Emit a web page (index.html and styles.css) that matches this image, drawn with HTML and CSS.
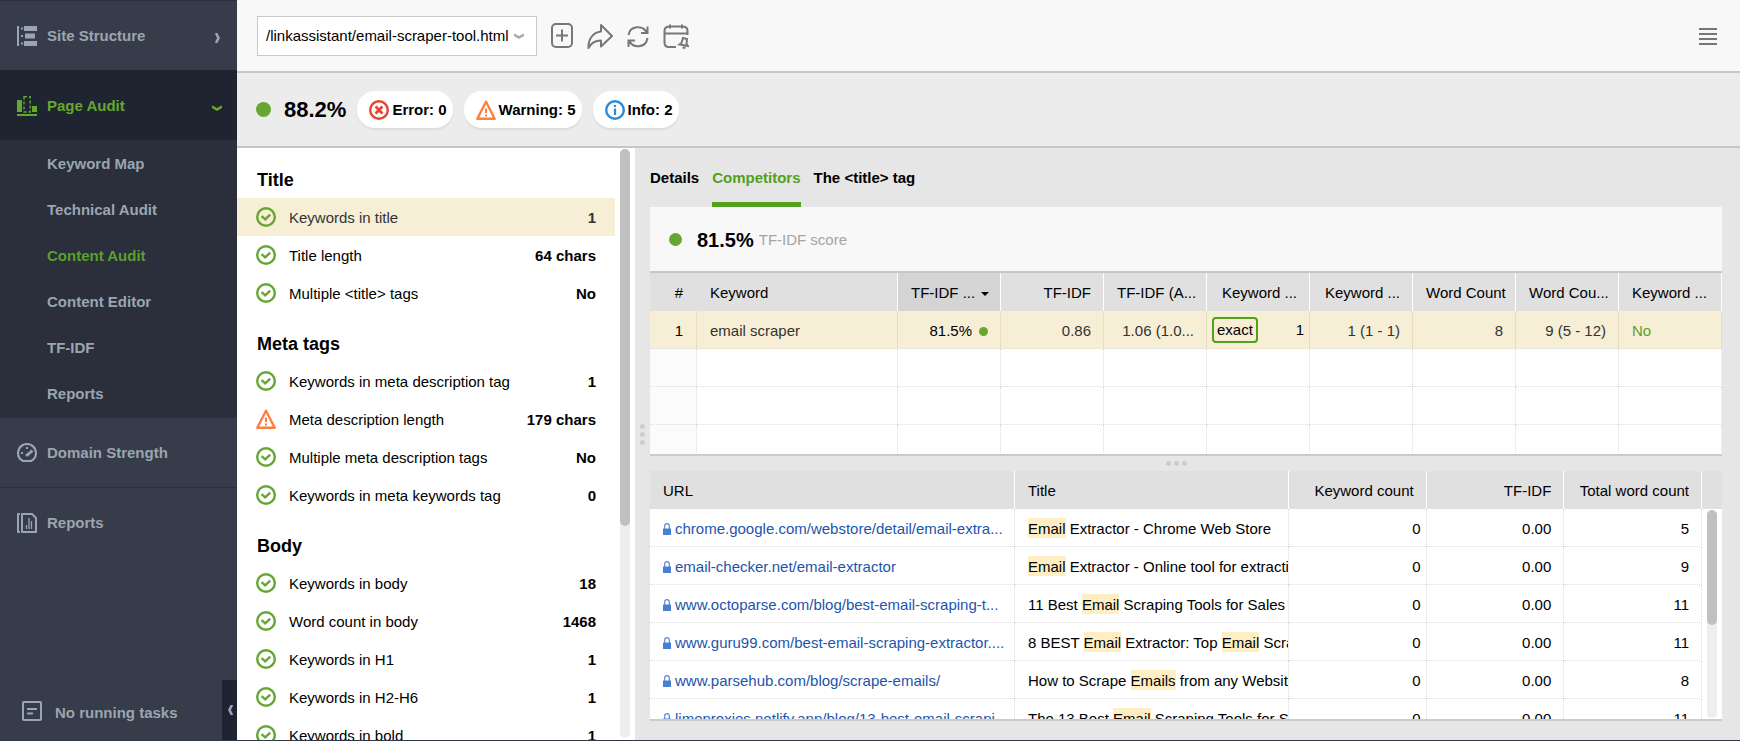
FILE: index.html
```html
<!DOCTYPE html>
<html lang="en">
<head>
    <meta charset="UTF-8">
    <meta name="viewport" content="width=device-width, initial-scale=1">
    <title>Content Audit</title>
    <link rel="stylesheet" href="styles.css">
</head>
<body>

<svg class="sprite" aria-hidden="true">
    <symbol id="ok" viewBox="0 0 20 20">
        <circle cx="10" cy="10" r="8.8" fill="none" stroke="#66a631" stroke-width="2.4"/>
        <path d="M5.600 9.200l3.600 3.200 5-4.800" fill="none" stroke="#66a631" stroke-width="2.400"/>
    </symbol>
    <symbol id="warn" viewBox="0 0 20 20">
        <path d="M10 1.800L18.700 18.800H1.300z" fill="none" stroke="#ff7f3f" stroke-width="2.400" stroke-linejoin="round"/>
        <path d="M10 8.500v4.500M10 14.400v2" stroke="#ff7f3f" stroke-width="2"/>
    </symbol>
    <symbol id="error" viewBox="0 0 20 20">
        <circle cx="10" cy="10" r="8.8" fill="none" stroke="#e8432f" stroke-width="2.400"/>
        <path d="M6.600 6.600l6.800 6.800M13.400 6.600l-6.800 6.800" stroke="#e8432f" stroke-width="2.800"/>
    </symbol>
    <symbol id="info" viewBox="0 0 20 20">
        <circle cx="10" cy="10" r="8.8" fill="none" stroke="#2a8adb" stroke-width="2.400"/>
        <path d="M10 5v2M10 8.500v6.500" stroke="#2a8adb" stroke-width="2.200"/>
    </symbol>
    <symbol id="lock" viewBox="0 0 8 12">
        <path d="M1.700 6V3a2.300 2.300 0 0 1 4.600 0v3" fill="none" stroke="#5b8ad6" stroke-width="1.200"/>
        <path d="M0 5.500h8V12H0z" fill="#4a80d2"/>
    </symbol>
</svg>

<div class="app">
    <nav class="sidebar">
        <a class="nav-item" href="#">
            <svg class="icon" viewBox="0 0 20 20" fill="currentColor"><path d="M0 0h2v20H0zM7 0h13v5H7zM8 7.500h10v5H8zM7 15h13v5H7zM4 1.500h2v2H4zM4 9h2v2H4zM4 16.500h2v2H4z"/></svg>
            <span>Site Structure</span>
            <svg class="arrow" viewBox="0 0 10 10"><path d="M4 0L6.500 5L4 10" fill="none" stroke="currentColor" stroke-width="2.600"/></svg>
        </a>
        <a class="nav-item open" href="#">
            <svg class="icon" viewBox="0 0 20 20" fill="currentColor"><path d="M0 4h5v12H0zM15 10h5v6h-5zM0 18h20v2H0z"/><path d="M7 .8h6.200v15.200H7z" fill="none" stroke="currentColor" stroke-width="1.400" stroke-dasharray="3 2"/></svg>
            <span>Page Audit</span>
            <svg class="arrow" viewBox="0 0 10 10"><path d="M0 3.500L5 6.500L10 3.500" fill="none" stroke="currentColor" stroke-width="2.600"/></svg>
        </a>
        <div class="submenu">
            <a href="#">Keyword Map</a>
            <a href="#">Technical Audit</a>
            <a class="active" href="#">Content Audit</a>
            <a href="#">Content Editor</a>
            <a href="#">TF-IDF</a>
            <a href="#">Reports</a>
        </div>
        <a class="nav-item" href="#">
            <svg class="icon" viewBox="0 0 20 20" fill="none" stroke="currentColor" stroke-width="2.200"><path d="M6 18h8c3-1.500 5-4 5-8a9 9 0 0 0-18 0c0 4 2 6.500 5 8z"/><path d="M10 12.200l5.500-4.600" stroke-width="2.800"/><circle cx="10" cy="12" r="1.600" fill="currentColor" stroke="none"/><path d="M9 5h2M4 10h2"/></svg>
            <span>Domain Strength</span>
        </a>
        <a class="nav-item" href="#">
            <svg class="icon" viewBox="0 0 20 20" fill="none" stroke="currentColor" stroke-width="2"><path d="M3 1H1v18h2M5 1h10l4 4v14H5z" stroke-linejoin="round"/><path d="M9.500 12v4M12 5v11M14.500 8v8" stroke-width="1.300"/></svg>
            <span>Reports</span>
        </a>
        <div class="tasks">
            <svg class="icon" viewBox="0 0 20 20" fill="none" stroke="currentColor" stroke-width="2"><rect x="1" y="1" width="18" height="18" rx="1"/><path d="M5 8h10M5 12.500h6"/></svg>
            <span>No running tasks</span>
            <button class="collapse" aria-label="Collapse menu">
                <svg class="arrow" viewBox="0 0 10 10"><path d="M7 0L4.500 5L7 10" fill="none" stroke="currentColor" stroke-width="2.600"/></svg>
            </button>
        </div>
    </nav>

    <div class="main">
        <header class="toolbar">
            <div class="page-select">
                <select aria-label="Page">
                    <option>/linkassistant/email-scraper-tool.html</option>
                </select>
                <svg class="arrow" viewBox="0 0 10 10"><path d="M0 3.500L5 6.500L10 3.500" fill="none" stroke="#aaa" stroke-width="2.600"/></svg>
            </div>
            <button aria-label="Add page"><svg viewBox="0 0 26 26"><rect x="3" y="1" width="20" height="23" rx="4"/><path d="M13 6.500v12M7 12.500h12"/></svg></button>
            <button aria-label="Share"><svg viewBox="0 0 26 26"><path d="M14 2l11 11-11 10.500v-6C8 17.500 4 20 1.500 25 1 16 6 9.500 14 8.500z" stroke-linejoin="round"/></svg></button>
            <button aria-label="Refresh"><svg viewBox="0 0 26 26"><path d="M3.500 12C5 2.500 18 1.500 22 10M22.500 3.500V10H16M22.500 15C21 25 8 26 4 17.500M3.500 24v-6.500H10"/></svg></button>
            <button aria-label="Schedule"><svg viewBox="0 0 26 26"><path d="M13 24H6c-3 0-4.500-2-4.500-4.500V8c0-3 1.500-4.500 4.500-4.500h14c3 0 4.500 1.500 4.500 4.500v4M1.500 10.500h23M7 1.500v4M19 1.500v4"/><path d="M16.500 21.500l2-1.500 1.500-5 4 1-.5 5 1.500 2zM19.500 24.800h3"/></svg></button>
            <button class="menu" aria-label="Menu"><svg viewBox="0 0 18 18"><path d="M0 2h18M0 7h18M0 12h18M0 17h18"/></svg></button>
        </header>

        <section class="summary">
            <span class="dot"></span>
            <strong class="total">88.2%</strong>
            <button class="pill"><svg class="icon"><use href="#error"/></svg>Error: 0</button>
            <button class="pill"><svg class="icon"><use href="#warn"/></svg>Warning: 5</button>
            <button class="pill"><svg class="icon"><use href="#info"/></svg>Info: 2</button>
        </section>

        <div class="content">
            <aside class="factors">
                <div class="factor-list">
                    <h2>Title</h2>
                    <ul>
                        <li class="selected"><svg class="icon"><use href="#ok"/></svg><span>Keywords in title</span><b>1</b></li>
                        <li><svg class="icon"><use href="#ok"/></svg><span>Title length</span><b>64 chars</b></li>
                        <li><svg class="icon"><use href="#ok"/></svg><span>Multiple &lt;title&gt; tags</span><b>No</b></li>
                    </ul>
                    <h2>Meta tags</h2>
                    <ul>
                        <li><svg class="icon"><use href="#ok"/></svg><span>Keywords in meta description tag</span><b>1</b></li>
                        <li><svg class="icon"><use href="#warn"/></svg><span>Meta description length</span><b>179 chars</b></li>
                        <li><svg class="icon"><use href="#ok"/></svg><span>Multiple meta description tags</span><b>No</b></li>
                        <li><svg class="icon"><use href="#ok"/></svg><span>Keywords in meta keywords tag</span><b>0</b></li>
                    </ul>
                    <h2>Body</h2>
                    <ul>
                        <li><svg class="icon"><use href="#ok"/></svg><span>Keywords in body</span><b>18</b></li>
                        <li><svg class="icon"><use href="#ok"/></svg><span>Word count in body</span><b>1468</b></li>
                        <li><svg class="icon"><use href="#ok"/></svg><span>Keywords in H1</span><b>1</b></li>
                        <li><svg class="icon"><use href="#ok"/></svg><span>Keywords in H2-H6</span><b>1</b></li>
                        <li><svg class="icon"><use href="#ok"/></svg><span>Keywords in bold</span><b>1</b></li>
                    </ul>
                </div>
                <div class="scroll"><div class="thumb" style="height: 64%"></div></div>
            </aside>

            <div class="grip vertical"><i></i><i></i><i></i></div>

            <section class="details">
                <div class="tabs">
                    <button>Details</button>
                    <button class="active">Competitors</button>
                    <button>The &lt;title&gt; tag</button>
                </div>
                <div class="score">
                    <span class="dot"></span>
                    <strong>81.5%</strong>
                    <span class="hint">TF-IDF score</span>
                </div>
                <div class="keywords">
                    <table>
                        <colgroup>
                            <col class="c-num"><col class="c-keyword"><col><col><col><col><col><col><col><col>
                        </colgroup>
                        <thead>
                            <tr>
                                <th class="num">#</th>
                                <th class="left">Keyword</th>
                                <th class="sorted">TF-IDF ...<i class="sort"></i></th>
                                <th>TF-IDF</th>
                                <th>TF-IDF (A...</th>
                                <th>Keyword ...</th>
                                <th>Keyword ...</th>
                                <th>Word Count</th>
                                <th>Word Cou...</th>
                                <th class="left">Keyword ...</th>
                            </tr>
                        </thead>
                        <tbody>
                            <tr class="selected">
                                <td class="num">1</td>
                                <td class="left">email scraper</td>
                                <td class="rate">81.5%<i class="dot"></i></td>
                                <td>0.86</td>
                                <td>1.06 (1.0...</td>
                                <td class="match"><div><span class="exact">exact</span>1</div></td>
                                <td>1 (1 - 1)</td>
                                <td>8</td>
                                <td>9 (5 - 12)</td>
                                <td class="left no">No</td>
                            </tr>
                            <tr><td></td><td></td><td></td><td></td><td></td><td></td><td></td><td></td><td></td><td></td></tr>
                            <tr><td></td><td></td><td></td><td></td><td></td><td></td><td></td><td></td><td></td><td></td></tr>
                            <tr><td></td><td></td><td></td><td></td><td></td><td></td><td></td><td></td><td></td><td></td></tr>
                        </tbody>
                    </table>
                </div>
                <div class="grip horizontal"><i></i><i></i><i></i></div>
                <div class="pages">
                    <table>
                        <colgroup>
                            <col class="c-url"><col class="c-title"><col class="c-count"><col class="c-count"><col class="c-count">
                        </colgroup>
                        <thead>
                            <tr>
                                <th class="left">URL</th>
                                <th class="left">Title</th>
                                <th>Keyword count</th>
                                <th>TF-IDF</th>
                                <th>Total word count</th>
                            </tr>
                        </thead>
                        <tbody>
                            <tr>
                                <td class="left"><a href="#"><svg class="lock"><use href="#lock"/></svg>chrome.google.com/webstore/detail/email-extra...</a></td>
                                <td class="left"><mark>Email</mark> Extractor - Chrome Web Store</td>
                                <td class="tight">0</td>
                                <td>0.00</td>
                                <td>5</td>
                            </tr>
                            <tr>
                                <td class="left"><a href="#"><svg class="lock"><use href="#lock"/></svg>email-checker.net/email-extractor</a></td>
                                <td class="left"><mark>Email</mark> Extractor - Online tool for extracting</td>
                                <td class="tight">0</td>
                                <td>0.00</td>
                                <td>9</td>
                            </tr>
                            <tr>
                                <td class="left"><a href="#"><svg class="lock"><use href="#lock"/></svg>www.octoparse.com/blog/best-email-scraping-t...</a></td>
                                <td class="left">11 Best <mark>Email</mark> Scraping Tools for Sales</td>
                                <td class="tight">0</td>
                                <td>0.00</td>
                                <td>11</td>
                            </tr>
                            <tr>
                                <td class="left"><a href="#"><svg class="lock"><use href="#lock"/></svg>www.guru99.com/best-email-scraping-extractor....</a></td>
                                <td class="left">8 BEST <mark>Email</mark> Extractor: Top <mark>Email</mark> Scraper</td>
                                <td class="tight">0</td>
                                <td>0.00</td>
                                <td>11</td>
                            </tr>
                            <tr>
                                <td class="left"><a href="#"><svg class="lock"><use href="#lock"/></svg>www.parsehub.com/blog/scrape-emails/</a></td>
                                <td class="left">How to Scrape <mark>Emails</mark> from any Website</td>
                                <td class="tight">0</td>
                                <td>0.00</td>
                                <td>8</td>
                            </tr>
                            <tr>
                                <td class="left"><a href="#"><svg class="lock"><use href="#lock"/></svg>limeproxies.netlify.app/blog/13-best-email-scrapi...</a></td>
                                <td class="left">The 13 Best <mark>Email</mark> Scraping Tools for Sales</td>
                                <td class="tight">0</td>
                                <td>0.00</td>
                                <td>11</td>
                            </tr>
                        </tbody>
                    </table>
                    <div class="pages-side">
                        <div class="scroll"><div class="thumb" style="height: 55%"></div></div>
                    </div>
                </div>
            </section>
        </div>
    </div>
</div>

</body>
</html>
```

FILE: styles.css
```css
* {
    box-sizing: border-box;
}
body {
    margin: 0;
    font-family: "Liberation Sans", Arial, sans-serif;
    font-size: 15px;
    line-height: 20px;
    color: #000;
}
button, select {
    font: inherit;
    color: inherit;
    margin: 0;
    padding: 0;
    border: 0;
    background: none;
    cursor: pointer;
}
a {
    text-decoration: none;
}
.sprite {
    display: none;
}
.icon {
    width: 20px;
    height: 20px;
    flex: none;
}
.arrow {
    width: 10px;
    height: 10px;
    flex: none;
}
.dot {
    flex: none;
    border-radius: 50%;
    background: #66a631;
}
.app {
    display: flex;
    height: 100vh;
    overflow: hidden;
    border-bottom: 1px solid #30384a;
}

/* sidebar */
.sidebar {
    width: 237px;
    flex: none;
    display: flex;
    flex-direction: column;
    background: #363c4a;
    color: #9ba5b1;
    font-weight: bold;
}
.nav-item {
    display: flex;
    align-items: center;
    gap: 10px;
    height: 70px;
    padding: 0 15px 0 17px;
    border-top: 1px solid #2a303c;
    color: inherit;
}
.nav-item span {
    flex: 1;
    padding-top: 1px;
}
.nav-item .arrow {
    margin-top: 4px;
}
.nav-item.open {
    background: #1f2530;
    border-color: #1f2530;
    color: #66a631;
}
.submenu {
    background: #2a2f3b;
    padding-bottom: 1px;
}
.submenu a {
    display: block;
    padding: 14px 0 12px 47px;
    color: inherit;
}
.submenu a.active {
    color: #5aa02c;
}
.tasks {
    display: flex;
    align-items: center;
    gap: 13px;
    margin-top: auto;
    height: 60px;
    padding-left: 22px;
}
.tasks .icon {
    margin-top: 2px;
}
.tasks span {
    padding-top: 5px;
}
.collapse {
    display: flex;
    align-items: center;
    justify-content: center;
    width: 15px;
    height: 100%;
    margin-left: auto;
    background: #1f2530;
}

/* toolbar */
.main {
    flex: 1;
    min-width: 0;
    display: flex;
    flex-direction: column;
}
.toolbar {
    display: flex;
    align-items: center;
    gap: 12px;
    height: 73px;
    flex: none;
    padding: 0 23px 0 20px;
    background: #f8f8f8;
    border-bottom: 2px solid #c6c6c6;
}
.toolbar button {
    height: 26px;
}
.toolbar svg {
    display: block;
}
.toolbar button svg {
    width: 26px;
    height: 26px;
    fill: none;
    stroke: #777;
    stroke-width: 2;
}
.toolbar .menu {
    margin-left: auto;
    height: 18px;
}
.toolbar .menu svg {
    width: 18px;
    height: 18px;
}
.page-select {
    position: relative;
    width: 280px;
}
.page-select select {
    appearance: none;
    width: 100%;
    height: 40px;
    padding: 0 24px 0 8px;
    border: 1px solid #c9c9c9;
    background: #fff;
}
.page-select .arrow {
    position: absolute;
    right: 13px;
    top: 15px;
    pointer-events: none;
}

/* audit summary */
.summary {
    display: flex;
    align-items: center;
    gap: 11px;
    height: 75px;
    flex: none;
    padding: 0 19px;
    background: #ececec;
    border-bottom: 2px solid #c6c6c6;
}
.summary .dot {
    width: 15px;
    height: 15px;
}
.total {
    font-size: 22px;
    margin-left: 2px;
}
.pill {
    display: flex;
    align-items: center;
    gap: 3px;
    height: 37px;
    padding: 0 6px 0 12px;
    border-radius: 18px;
    background: #fff;
    box-shadow: 0 2px 2px #ddd;
    font-weight: bold;
}

/* factors list */
.content {
    flex: 1;
    min-height: 0;
    display: flex;
    background: #e6e6e6;
}
.factors {
    display: flex;
    width: 398px;
    flex: none;
    padding-right: 5px;
    gap: 5px;
    background: #fff;
}
.factor-list {
    flex: 1;
    overflow: hidden;
}
.factor-list h2 {
    margin: 0;
    padding: 22px 20px 8px;
    font-size: 18px;
    line-height: 20px;
}
.factor-list ul {
    list-style: none;
    margin: 0;
    padding: 0;
}
.factor-list li {
    display: flex;
    align-items: center;
    height: 38px;
    padding: 0 19px;
    gap: 13px;
}
.factor-list span, .factor-list b {
    padding-top: 2px;
}
.factor-list li b {
    margin-left: auto;
}
.factor-list .selected {
    background: #f7eed6;
    color: #333;
}
.scroll {
    width: 10px;
    margin: 1px 0 2px;
    border-radius: 5px;
    background: #eee;
}
.thumb {
    border-radius: 5px;
    background: #c0c0c0;
}

/* splitters */
.grip {
    display: flex;
    align-items: center;
    justify-content: center;
    gap: 3px;
    height: 15px;
    flex: none;
}
.grip i {
    width: 5px;
    height: 5px;
    border-radius: 50%;
    background: #cdcdcd;
}
.grip.vertical {
    flex-direction: column;
    width: 15px;
    height: auto;
    padding-right: 1px;
    padding-bottom: 19px;
}
.grip.horizontal {
    padding-right: 20px;
}

/* details */
.details {
    flex: 1;
    min-width: 0;
    display: flex;
    flex-direction: column;
    padding: 0 18px 19px 0;
}
.tabs {
    display: flex;
    gap: 13px;
    height: 59px;
    flex: none;
}
.tabs button {
    padding-top: 5px;
    font-weight: bold;
    border-bottom: 5px solid transparent;
}
.tabs .active {
    color: #53a01c;
    border-color: #53a01c;
}
.score {
    display: flex;
    align-items: center;
    height: 66px;
    flex: none;
    padding-left: 19px;
    background: #f8f8f8;
    border-bottom: 2px solid #c6c6c6;
}
.score .dot {
    width: 13px;
    height: 13px;
    margin-right: 15px;
}
.score strong {
    padding-top: 2px;
    font-size: 20px;
}
.score .hint {
    padding-top: 2px;
    margin-left: 5px;
    color: #a4a4a4;
}

/* tables */
.keywords, .pages {
    min-height: 0;
    overflow: hidden;
    background: #fff;
    border-bottom: 2px solid #cbcbcb;
}
.keywords {
    flex: 183 1 0;
}
.pages {
    flex: 250 1 0;
    display: flex;
}
table {
    width: 100%;
    table-layout: fixed;
    border-collapse: separate;
    border-spacing: 0;
}
.pages table {
    flex: 1;
    min-width: 0;
    align-self: flex-start;
}
th, td {
    height: 38px;
    padding: 0 12px 0 13px;
    overflow: hidden;
    white-space: nowrap;
    text-align: right;
    font-weight: normal;
}
th {
    padding-top: 2px;
    background: #e0e0e0;
    border-right: 1px solid #fff;
}
td {
    padding-top: 2px;
    border-right: 1px dotted #dcdcdc;
    border-bottom: 1px dotted #dcdcdc;
}
.left {
    text-align: left;
}
.num {
    padding-right: 13px;
}
th.num {
    border-right-color: #e0e0e0;
}
.sorted {
    background: #d4d4d4;
}
.sort {
    display: inline-block;
    margin-left: 6px;
    vertical-align: middle;
    border: 4px solid transparent;
    border-top-color: #000;
    border-bottom: 0;
}
.keywords td:first-child {
    background: #fbfbfb;
}
.keywords .selected td {
    background: #f7eed6;
    border-right: 1px solid #e8dfc3;
    color: #333;
}
.keywords .selected .num, .keywords .selected .rate, .keywords .selected .match {
    color: #000;
}
.rate .dot {
    display: inline-block;
    width: 9px;
    height: 9px;
    margin-left: 7px;
}
.match {
    padding: 1px 5px 0;
}
.match div {
    display: flex;
    align-items: center;
    justify-content: space-between;
}
.exact {
    padding: 1px 3px;
    border: 2px solid #53a01c;
    border-radius: 4px;
}
.keywords .selected .no {
    color: #5aa02c;
}
.c-num {
    width: 47px;
}
.c-keyword {
    width: 201px;
}
.c-url {
    width: 365px;
}
.c-title {
    width: 274px;
}
.tight {
    padding-right: 5px;
}
.pages a {
    color: #1c55ad;
}
.lock {
    width: 8px;
    height: 12px;
    margin-right: 4px;
    vertical-align: -1px;
}
mark {
    padding: 2px 0 1px;
    background: #ffeec4;
    color: inherit;
}
.pages-side {
    display: flex;
    flex-direction: column;
    width: 20px;
    border-top: 38px solid #e0e0e0;
}
.pages-side .scroll {
    flex: 1;
    margin: 1px 5px;
}
```
